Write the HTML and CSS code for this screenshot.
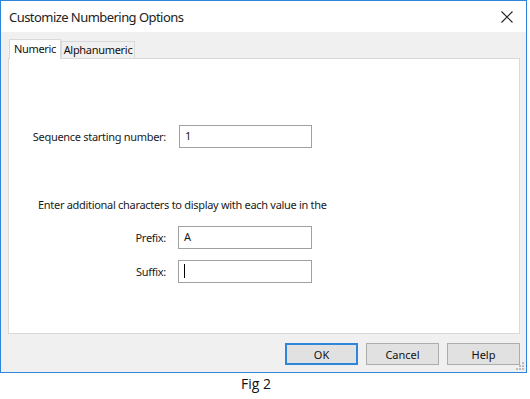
FILE: index.html
```html
<!DOCTYPE html>
<html lang="en">
<head>
    <meta charset="UTF-8">
    <title>Customize Numbering Options</title>
    <link rel="stylesheet" href="styles.css">
</head>
<body>
    <div class="window">
        <div class="title-bar">
            <span class="title">Customize Numbering Options</span>
            <svg class="close" width="12" height="12" viewBox="0 0 12 12">
                <path d="M0.5 0.5 L11.5 11.5 M11.5 0.5 L0.5 11.5" stroke="#222" stroke-width="1.1" fill="none"/>
            </svg>
        </div>
        <div class="client">
            <div class="tabs">
                <div class="tab active">Numeric</div>
                <div class="tab tab-alpha">Alphanumeric</div>
            </div>
            <div class="panel">
                <div class="row row-seq">
                    <label class="label">Sequence starting number:</label>
                    <div class="field">1</div>
                </div>
                <p class="hint">Enter additional characters to display with each value in the</p>
                <div class="row row-prefix">
                    <label class="label">Prefix:</label>
                    <div class="field">A</div>
                </div>
                <div class="row row-suffix">
                    <label class="label">Suffix:</label>
                    <div class="field"><span class="caret"></span></div>
                </div>
            </div>
            <div class="buttons">
                <button class="btn default">OK</button>
                <button class="btn">Cancel</button>
                <button class="btn">Help</button>
            </div>
            <svg class="grip" width="10" height="10" viewBox="0 0 10 10">
                <rect x="7" y="1" width="2" height="2" fill="#bdbdbd"/>
                <rect x="4" y="4" width="2" height="2" fill="#bdbdbd"/>
                <rect x="7" y="4" width="2" height="2" fill="#bdbdbd"/>
                <rect x="1" y="7" width="2" height="2" fill="#bdbdbd"/>
                <rect x="4" y="7" width="2" height="2" fill="#bdbdbd"/>
                <rect x="7" y="7" width="2" height="2" fill="#bdbdbd"/>
            </svg>
        </div>
    </div>
    <div class="caption">Fig 2</div>
</body>
</html>
```

FILE: styles.css
```css
body {
    margin: 0;
    background-color: #fff;
    font-family: "Noto Sans", "Open Sans", sans-serif;
    color: #1a1a1a;
}
.window {
    width: 525px;
    height: 371px;
    border: 1px solid #2e86d8;
    display: flex;
    flex-direction: column;
}
.title-bar {
    height: 31px;
    background-color: #fff;
    display: flex;
    align-items: center;
    justify-content: space-between;
    padding: 0 13px 0 8px;
}
.title {
    font-size: 13px;
    color: #222;
    letter-spacing: -0.55px;
}
.close {
    margin-top: 1px;
}
.client {
    flex: 1;
    background-color: #f0f0f0;
    padding: 7px 6px 0 7px;
    position: relative;
    display: flex;
    flex-direction: column;
}
.tabs {
    display: flex;
    align-items: flex-end;
    height: 19px;
    padding-left: 1px;
}
.tab {
    font-size: 11px;
    letter-spacing: -0.3px;
    height: 17px;
    line-height: 16px;
    width: 74px;
    text-align: center;
    border: 1px solid #d9d9d9;
    border-bottom: none;
    box-sizing: border-box;
    background-color: #f0f0f0;
    color: #111;
}
.tab.active {
    width: 52px;
    height: 20px;
    line-height: 18px;
    background-color: #fff;
    margin-bottom: -1px;
    position: relative;
    z-index: 1;
}
.panel {
    height: 276px;
    background-color: #fff;
    border: 1px solid #d9d9d9;
    box-sizing: border-box;
    font-size: 11px;
    letter-spacing: -0.3px;
    padding-top: 66px;
}
.row {
    display: flex;
    align-items: center;
    height: 23px;
}
.label {
    width: 157px;
    text-align: right;
    padding-right: 13px;
    color: #1a1a1a;
}
.field {
    width: 133px;
    height: 23px;
    box-sizing: border-box;
    border: 1px solid #a0a0a0;
    padding: 2px 5px;
    line-height: 16px;
    background-color: #fff;
}
.row-prefix .field,
.row-suffix .field {
    width: 134px;
    margin-left: -1px;
}
.hint {
    margin: 49px 0 0 29px;
    line-height: 16px;
    height: 16px;
}
.row-prefix {
    margin-top: 13px;
}
.row-suffix {
    margin-top: 11px;
}
.caret {
    display: inline-block;
    width: 1px;
    height: 14px;
    background-color: #000;
    margin-top: 1px;
    vertical-align: top;
}
.buttons {
    display: flex;
    justify-content: flex-end;
    gap: 8px;
    margin-top: 9px;
}
.btn {
    width: 73px;
    height: 22px;
    font-family: "Noto Sans", "Open Sans", sans-serif;
    font-size: 11px;
    color: #111;
    background-color: #e1e1e1;
    border: 1px solid #adadad;
    padding: 0;
}
.btn.default {
    border: 2px solid #2f86d8;
}
.grip {
    position: absolute;
    right: 1px;
    bottom: 1px;
}
.caption {
    width: 512px;
    text-align: center;
    font-family: "Open Sans", sans-serif;
    font-size: 14px;
    margin-top: 1px;
    color: #111;
}
```
